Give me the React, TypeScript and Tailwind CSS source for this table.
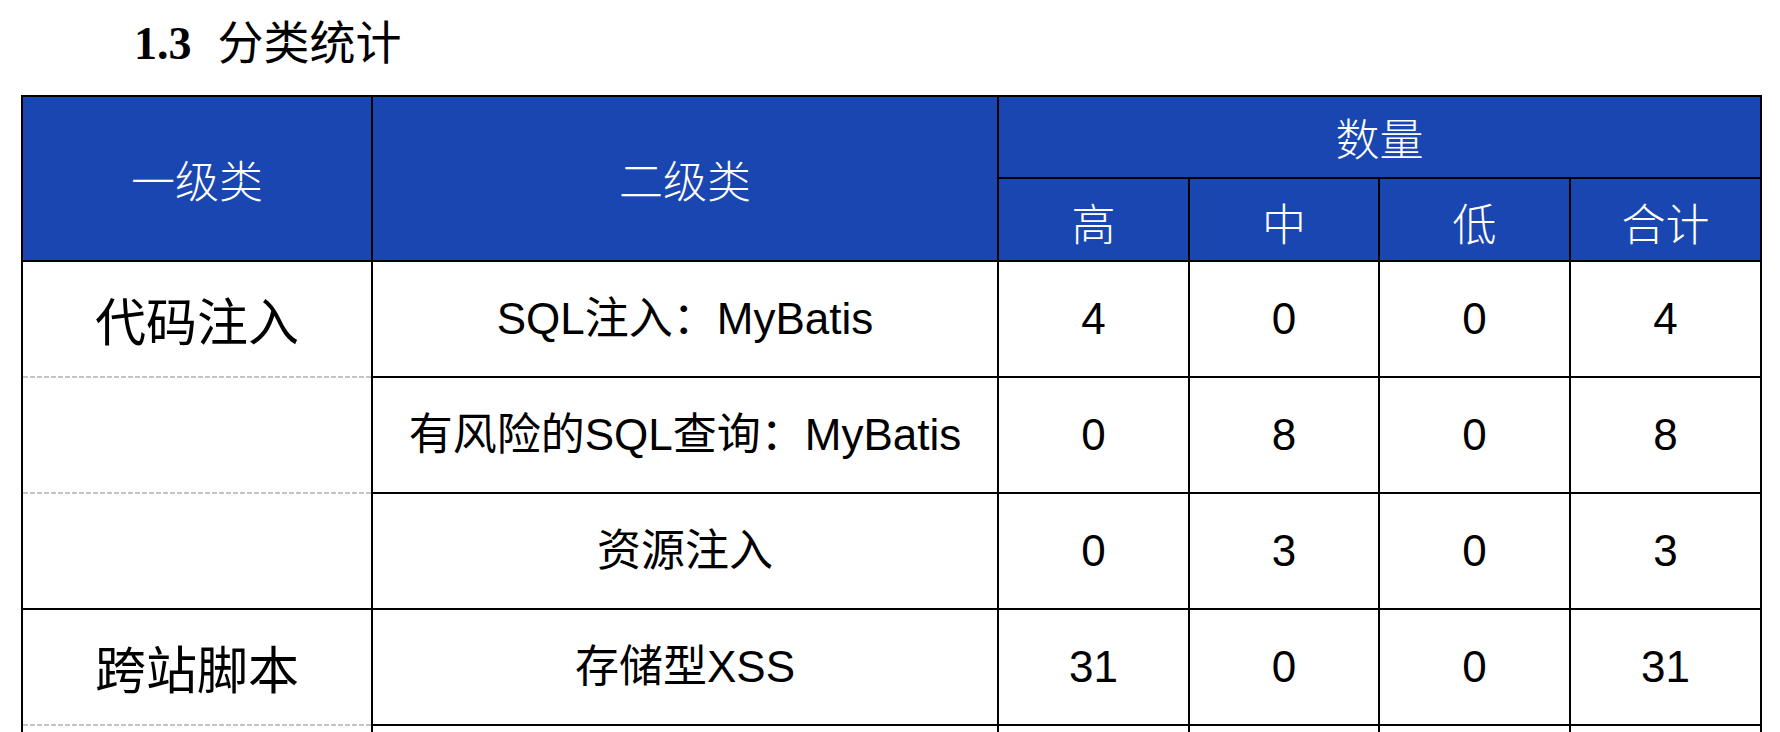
import React from "react";

const HEAD_BG = "bg-[#1a46b2]";
const SERIF_CJK = "font-['Noto_Sans_CJK_SC',sans-serif]";
const SANS = "font-['Liberation_Sans','Noto_Sans_CJK_SC',sans-serif]";

type Row = {
  cat: string;
  catBottom: "dashed" | "solid";
  name: string;
  vals: (number | string)[];
};

const rows: Row[] = [
  { cat: "代码注入", catBottom: "dashed", name: "SQL注入：MyBatis", vals: [4, 0, 0, 4] },
  { cat: "", catBottom: "dashed", name: "有风险的SQL查询：MyBatis", vals: [0, 8, 0, 8] },
  { cat: "", catBottom: "solid", name: "资源注入", vals: [0, 3, 0, 3] },
  { cat: "跨站脚本", catBottom: "dashed", name: "存储型XSS", vals: [31, 0, 0, 31] },
  { cat: "", catBottom: "dashed", name: "", vals: ["", "", "", ""] },
];

function CatCell({ text, bottom }: { text: string; bottom: "dashed" | "solid" }) {
  if (bottom === "solid") {
    return (
      <div className={`border-r-2 border-b-2 border-black flex items-center justify-center text-[51px] font-normal text-black ${SERIF_CJK}`}>
        {text}
      </div>
    );
  }
  return (
    <div className="border-r-2 border-black flex flex-col">
      <div className={`flex-1 flex items-center justify-center text-[51px] font-normal text-black ${SERIF_CJK}`}>
        {text}
      </div>
      <div className="h-[2px] w-full bg-[repeating-linear-gradient(90deg,#c4c4c4_0px,#c4c4c4_5px,transparent_5px,transparent_7px)]" />
    </div>
  );
}

function Cell({ children }: { children?: React.ReactNode }) {
  return (
    <div className={`border-r-2 border-b-2 border-black flex items-center justify-center text-[44px] text-black whitespace-nowrap ${SANS}`}>
      {children}
    </div>
  );
}

export default function App() {
  return (
    <div className="w-[1780px] h-[732px] overflow-hidden bg-white">
      <div className="h-[95px] pl-[134px] pt-[16px] leading-[46px] text-[46px] text-black whitespace-nowrap">
        <span className="font-['Liberation_Serif',serif] font-bold">1.3</span>
        <span className={`ml-[26px] ${SERIF_CJK}`}>分类统计</span>
      </div>
      <div className="ml-[21px] w-[1741px] border-t-2 border-l-2 border-black grid grid-cols-[350px_626px_191px_190px_191px_191px] grid-rows-[82px_83px_116px_116px_116px_116px_116px]">
        <div className={`row-span-2 border-r-2 border-b-2 border-black ${HEAD_BG} flex items-center justify-center text-white text-[44px] font-light ${SERIF_CJK}`}>
          一级类
        </div>
        <div className={`row-span-2 border-r-2 border-b-2 border-black ${HEAD_BG} flex items-center justify-center text-white text-[44px] font-light ${SERIF_CJK}`}>
          二级类
        </div>
        <div className={`col-span-4 border-r-2 border-b-2 border-black ${HEAD_BG} flex items-center justify-center text-white text-[44px] font-light ${SERIF_CJK}`}>
          数量
        </div>
        {["高", "中", "低", "合计"].map((h) => (
          <div
            key={h}
            className={`border-r-2 border-b-2 border-black ${HEAD_BG} flex items-center justify-center pt-[4px] text-white text-[44px] font-light ${SERIF_CJK}`}
          >
            {h}
          </div>
        ))}
        {rows.map((r, i) => (
          <React.Fragment key={i}>
            <CatCell text={r.cat} bottom={r.catBottom} />
            <Cell>{r.name}</Cell>
            {r.vals.map((v, j) => (
              <Cell key={j}>{v}</Cell>
            ))}
          </React.Fragment>
        ))}
      </div>
    </div>
  );
}
